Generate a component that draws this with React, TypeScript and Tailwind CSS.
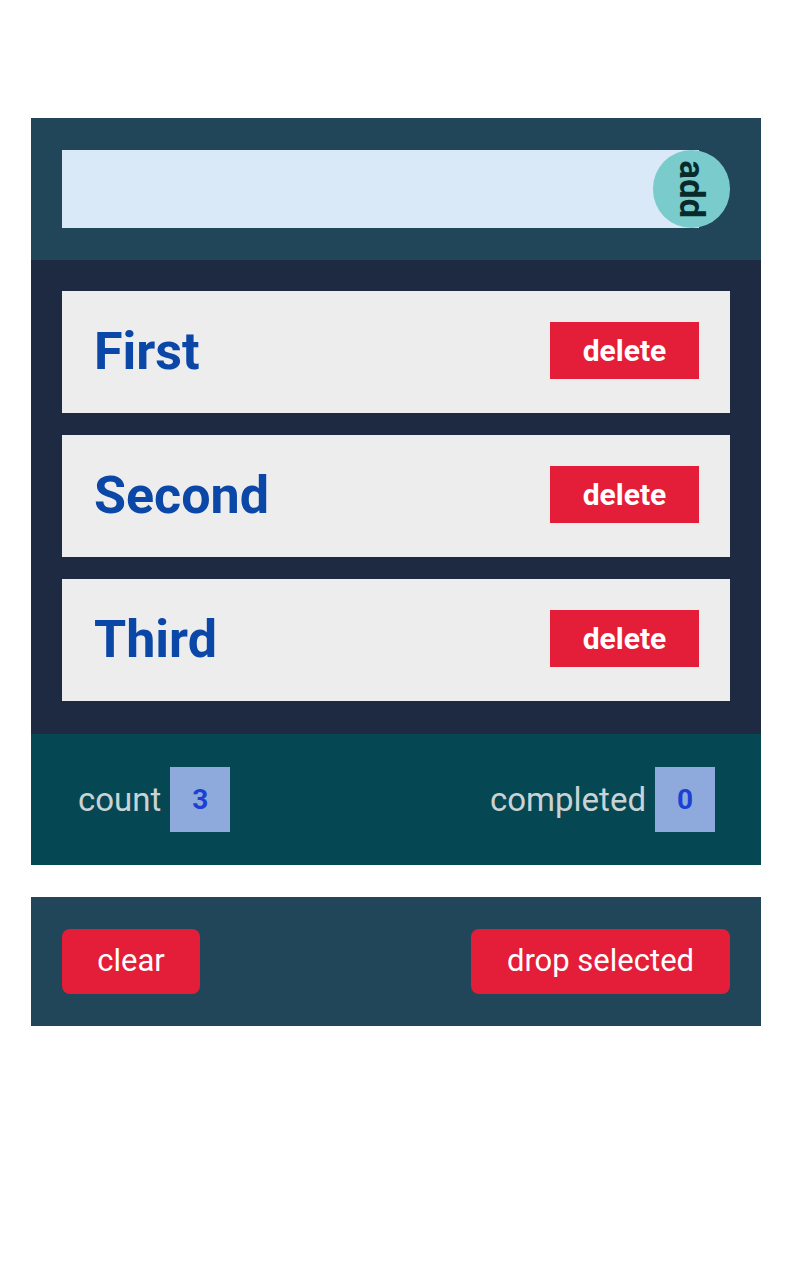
const items = ['First', 'Second', 'Third'];

const TodoRow = ({ title }: { title: string }) => (
  <div className="flex h-[122px] items-center justify-between bg-[#ededee] pl-8 pr-[31px]">
    <span className="text-[52px] font-bold text-[#0b47a7]">{title}</span>
    <button className="mb-[3px] h-[57px] w-[149px] bg-[#e41d38] text-[30px] font-bold text-white">delete</button>
  </div>
);

const Stat = ({ label, value }: { label: string; value: number }) => (
  <div className="flex items-center gap-[9px]">
    <span className="text-[33px] text-[#c9d3d4]">{label}</span>
    <span className="flex h-[65px] w-[60px] items-center justify-center bg-[#8eaadc] text-[28px] font-bold text-[#1c3fd4]">
      {value}
    </span>
  </div>
);

export default function App() {
  return (
    <div className="min-h-[1280px] bg-white pt-[118px] font-['Roboto','Liberation_Sans',sans-serif]">
      <div className="mx-[31px]">
        {/* add bar */}
        <div className="bg-[#224659] px-[31px] py-8">
          <div className="flex h-[78px] items-center">
            <input className="h-[78px] flex-1 bg-[#d9e9f8] outline-none" />
            <button className="-ml-[46px] flex h-[78px] w-[77px] items-center justify-center rounded-full bg-[#79cbcc]">
              <span className="rotate-90 text-[35px] font-bold text-[#082a2a]">add</span>
            </button>
          </div>
        </div>

        {/* list */}
        <div className="flex flex-col gap-[22px] bg-[#1e2a41] px-[31px] pt-[31px] pb-[33px]">
          {items.map((t) => (
            <TodoRow key={t} title={t} />
          ))}
        </div>

        {/* stats */}
        <div className="flex h-[131px] items-center justify-between bg-[#054753] pl-[47px] pr-[46px]">
          <Stat label="count" value={3} />
          <Stat label="completed" value={0} />
        </div>

        {/* actions */}
        <div className="mt-8 flex items-center justify-between bg-[#224659] px-[31px] py-8">
          <button className="h-[65px] w-[138px] rounded-lg bg-[#e41d38] text-[31px] text-white">clear</button>
          <button className="h-[65px] w-[259px] rounded-lg bg-[#e41d38] text-[31px] text-white">drop selected</button>
        </div>
      </div>
    </div>
  );
}
